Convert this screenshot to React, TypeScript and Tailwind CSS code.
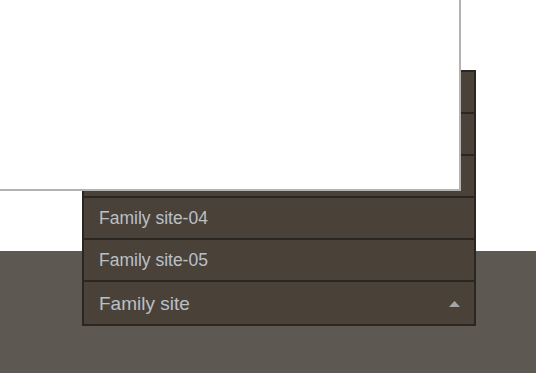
const sites = ['Family site-01', 'Family site-02', 'Family site-03', 'Family site-04', 'Family site-05']

export default function App() {
  return (
    <div className="relative h-[373px] w-full overflow-hidden bg-white font-['Liberation_Sans',Arial,sans-serif]">
      {/* Page body + footer band */}
      <div className="h-[251px] bg-white" />
      <div className="h-[122px] bg-[#5e5852]" />

      {/* Family site dropdown (opened) */}
      <div className="absolute left-[82px] top-[70px] w-[394px] border-2 border-[#2a2622] bg-[#4a4238]">
        <ul>
          {sites.map((site) => (
            <li key={site} className="flex h-[42px] items-center border-b-2 border-[#2a2622] pb-px pl-[15px] pt-[2px] text-[17.5px] text-[#b9c0ca]">
              {site}
            </li>
          ))}
        </ul>
        <button className="flex h-[42px] w-full items-center justify-between pl-[15px] pr-[14px] pt-[2px] text-[19px] text-[#b9c0ca]">
          <span>Family site</span>
          <svg width="11" height="6" viewBox="0 0 11 6">
            <path d="M5.5 0 L11 6 L0 6 Z" fill="#a3a7ac" />
          </svg>
        </button>
      </div>

      {/* Popup layer over the dropdown */}
      <div className="absolute left-0 top-0 z-10 h-[191px] w-[461px] border-b-2 border-r-2 border-[#b3b3b3] bg-white" />
    </div>
  )
}
